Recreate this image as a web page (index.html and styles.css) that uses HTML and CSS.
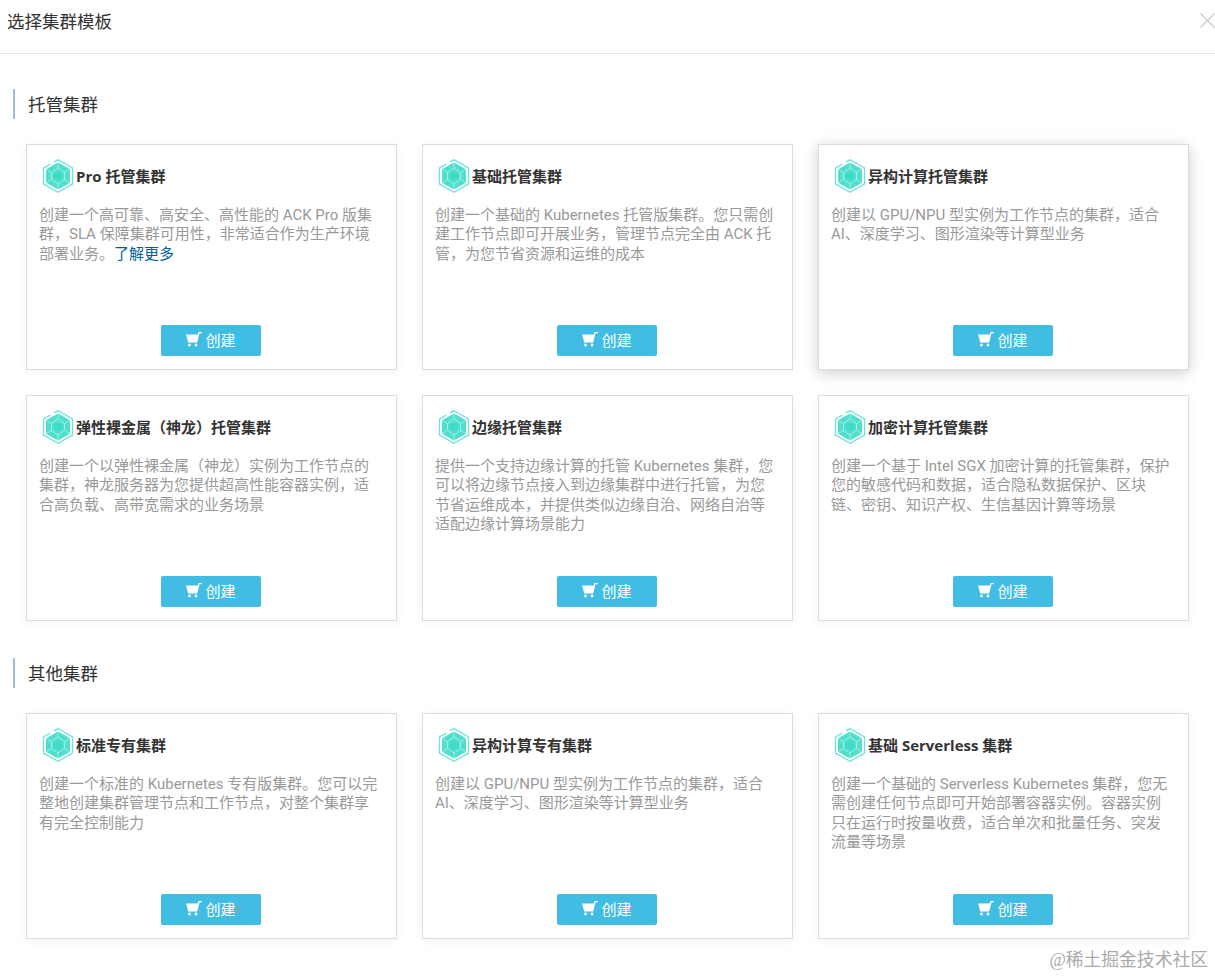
FILE: index.html
```html
<!DOCTYPE html>
<html lang="zh-CN">
<head>
<meta charset="utf-8">
<title>选择集群模板</title>
<link rel="stylesheet" href="styles.css">
</head>
<body>
<svg class="defs" width="0" height="0" aria-hidden="true">
  <symbol id="hex" viewBox="0 0 32 34">
    <path d="M12 2.800 16 .8 30.500 9v16L16 33.200 1.500 25V9l7-4" fill="none" stroke="#6ce4d9" stroke-width="1.300"/>
    <path d="M16 3.500 28 10.300v13.400L16 30.500 4 23.700V10.300z" fill="#50decd"/>
    <path d="M16 3.500v5.500M4 10.300l5.500 3.200M28 10.300l-5.500 3.200M4 23.700l5.500-3.200M28 23.700l-5.500-3.200M16 30.500v-5.500M9.500 13.500v7M22.500 13.500v7M16 9l-6.500 4.500M16 9l6.500 4.500M9.500 20.500l6.500 4.500M22.500 20.500l-6.500 4.500" fill="none" stroke="#a8f0e6" stroke-width=".9"/>
    <path d="M16 12.500l4 2.300v4.400L16 21.500l-4-2.300v-4.400z" fill="#3fdac8"/>
  </symbol>
  <symbol id="cart" viewBox="0 0 16 15">
    <path d="M0 2.500h11.800l.7-2.500H16v1.200h-2.500L11.200 10.500H2.300z" fill="#fff"/>
    <circle cx="3.500" cy="13" r="1.400" fill="#fff"/>
    <circle cx="10" cy="13" r="1.400" fill="#fff"/>
  </symbol>
</svg>

<header class="top">
  <h1 class="top-title">选择集群模板</h1>
  <svg class="close" viewBox="0 0 15 15" aria-label="关闭"><path d="M.5.500l14 14M14.500.500l-14 14" stroke="#cfcfcf" stroke-width="1.500" fill="none"/></svg>
</header>

<main class="content">
  <section class="section">
    <h2 class="section-title">托管集群</h2>
    <div class="grid">
      <article class="card">
        <div class="card-head"><svg class="hex"><use href="#hex"/></svg><h3 class="card-title"><b class="latin">Pro</b> 托管集群</h3></div>
        <p class="desc">创建一个高可靠、高安全、高性能的 ACK Pro 版集群，SLA 保障集群可用性，非常适合作为生产环境部署业务。<a class="more" href="#">了解更多</a></p>
        <a class="btn" href="#"><svg class="cart"><use href="#cart"/></svg>创建</a>
      </article>
      <article class="card">
        <div class="card-head"><svg class="hex"><use href="#hex"/></svg><h3 class="card-title">基础托管集群</h3></div>
        <p class="desc">创建一个基础的 Kubernetes 托管版集群。您只需创建工作节点即可开展业务，管理节点完全由 ACK 托管，为您节省资源和运维的成本</p>
        <a class="btn" href="#"><svg class="cart"><use href="#cart"/></svg>创建</a>
      </article>
      <article class="card card-hover">
        <div class="card-head"><svg class="hex"><use href="#hex"/></svg><h3 class="card-title">异构计算托管集群</h3></div>
        <p class="desc">创建以 GPU/NPU 型实例为工作节点的集群，适合 AI、深度学习、图形渲染等计算型业务</p>
        <a class="btn" href="#"><svg class="cart"><use href="#cart"/></svg>创建</a>
      </article>
      <article class="card">
        <div class="card-head"><svg class="hex"><use href="#hex"/></svg><h3 class="card-title">弹性裸金属（神龙）托管集群</h3></div>
        <p class="desc">创建一个以弹性裸金属（神龙）实例为工作节点的集群，神龙服务器为您提供超高性能容器实例，适合高负载、高带宽需求的业务场景</p>
        <a class="btn" href="#"><svg class="cart"><use href="#cart"/></svg>创建</a>
      </article>
      <article class="card">
        <div class="card-head"><svg class="hex"><use href="#hex"/></svg><h3 class="card-title">边缘托管集群</h3></div>
        <p class="desc">提供一个支持边缘计算的托管 Kubernetes 集群，您可以将边缘节点接入到边缘集群中进行托管，为您节省运维成本，并提供类似边缘自治、网络自治等适配边缘计算场景能力</p>
        <a class="btn" href="#"><svg class="cart"><use href="#cart"/></svg>创建</a>
      </article>
      <article class="card">
        <div class="card-head"><svg class="hex"><use href="#hex"/></svg><h3 class="card-title">加密计算托管集群</h3></div>
        <p class="desc">创建一个基于 Intel SGX 加密计算的托管集群，保护您的敏感代码和数据，适合隐私数据保护、区块链、密钥、知识产权、生信基因计算等场景</p>
        <a class="btn" href="#"><svg class="cart"><use href="#cart"/></svg>创建</a>
      </article>
    </div>
  </section>
  <section class="section">
    <h2 class="section-title">其他集群</h2>
    <div class="grid">
      <article class="card">
        <div class="card-head"><svg class="hex"><use href="#hex"/></svg><h3 class="card-title">标准专有集群</h3></div>
        <p class="desc">创建一个标准的 Kubernetes 专有版集群。您可以完整地创建集群管理节点和工作节点，对整个集群享有完全控制能力</p>
        <a class="btn" href="#"><svg class="cart"><use href="#cart"/></svg>创建</a>
      </article>
      <article class="card">
        <div class="card-head"><svg class="hex"><use href="#hex"/></svg><h3 class="card-title">异构计算专有集群</h3></div>
        <p class="desc">创建以 GPU/NPU 型实例为工作节点的集群，适合 AI、深度学习、图形渲染等计算型业务</p>
        <a class="btn" href="#"><svg class="cart"><use href="#cart"/></svg>创建</a>
      </article>
      <article class="card">
        <div class="card-head"><svg class="hex"><use href="#hex"/></svg><h3 class="card-title">基础 <b class="latin">Serverless</b> 集群</h3></div>
        <p class="desc">创建一个基础的 Serverless Kubernetes 集群，您无需创建任何节点即可开始部署容器实例。容器实例只在运行时按量收费，适合单次和批量任务、突发流量等场景</p>
        <a class="btn" href="#"><svg class="cart"><use href="#cart"/></svg>创建</a>
      </article>
    </div>
  </section>
</main>
<div class="watermark">@稀土掘金技术社区</div>
</body>
</html>
```
FILE: styles.css
```css
* { box-sizing: border-box; }
html, body { margin: 0; padding: 0; background: #fff; }
body {
  position: relative;
  height: 976px;
  overflow: hidden;
  font-family: Roboto, "Noto Sans CJK SC", sans-serif;
  color: #333;
}
.defs { position: absolute; }
.top {
  height: 54px;
  border-bottom: 1px solid #e5e5e5;
  display: flex;
  justify-content: space-between;
  align-items: flex-start;
  padding: 0 0 0 7px;
}
.top-title { margin: 12px 0 0; font-size: 17.5px; font-weight: 400; line-height: 20px; color: #333; }
.close { width: 15px; height: 15px; display: block; margin-top: 13px; }
.content { padding: 35px 26px 0 13px; }
.section + .section { margin-top: 37px; }
.section-title {
  margin: 0 0 25px;
  height: 30px;
  line-height: 32px;
  border-left: 2px solid #a3bbd2;
  padding-left: 13px;
  font-size: 17.5px;
  font-weight: 400;
  color: #333;
}
.grid {
  display: grid;
  grid-template-columns: repeat(3, 371px);
  grid-auto-rows: 226px;
  gap: 25px;
  margin-left: 13px;
}
.card {
  display: flex;
  flex-direction: column;
  border: 1px solid #dcdcdc;
  background: #fff;
  padding: 14px 13px 13px 12px;
  box-shadow: 0 2px 10px rgba(0, 0, 0, .05);
}
.card-hover { box-shadow: 0 3px 14px rgba(0, 0, 0, .2); }
.card-head { display: flex; align-items: center; height: 34px; margin-left: 3px; }
.hex { width: 32px; height: 34px; flex: none; }
.card-title {
  margin: 0 0 0 2px;
  font-family: "Open Sans", "Noto Sans CJK SC", sans-serif;
  font-size: 15px;
  font-weight: 700;
  line-height: 20px;
  color: #333;
}
.latin { font-weight: 700; }
.desc {
  margin: 12.500px 0 0;
  min-height: 0;
  font-size: 15px;
  line-height: 19.600px;
  color: #999;
  flex: 1;
}
.more { color: #00609c; text-decoration: none; }
.btn {
  align-self: center;
  flex: none;
  width: 100px;
  height: 31px;
  padding-bottom: 2px;
  border-radius: 2px;
  background: #41bde3;
  color: #fff;
  font-size: 15px;
  text-decoration: none;
  display: flex;
  align-items: center;
  justify-content: center;
  gap: 3px;
}
.cart { width: 16px; height: 15px; flex: none; }
.watermark {
  position: absolute;
  right: 7px;
  top: 950px;
  font-family: "Liberation Serif", "Noto Sans CJK SC", serif;
  font-size: 17.800px;
  line-height: 20px;
  color: #aaa;
}
```
